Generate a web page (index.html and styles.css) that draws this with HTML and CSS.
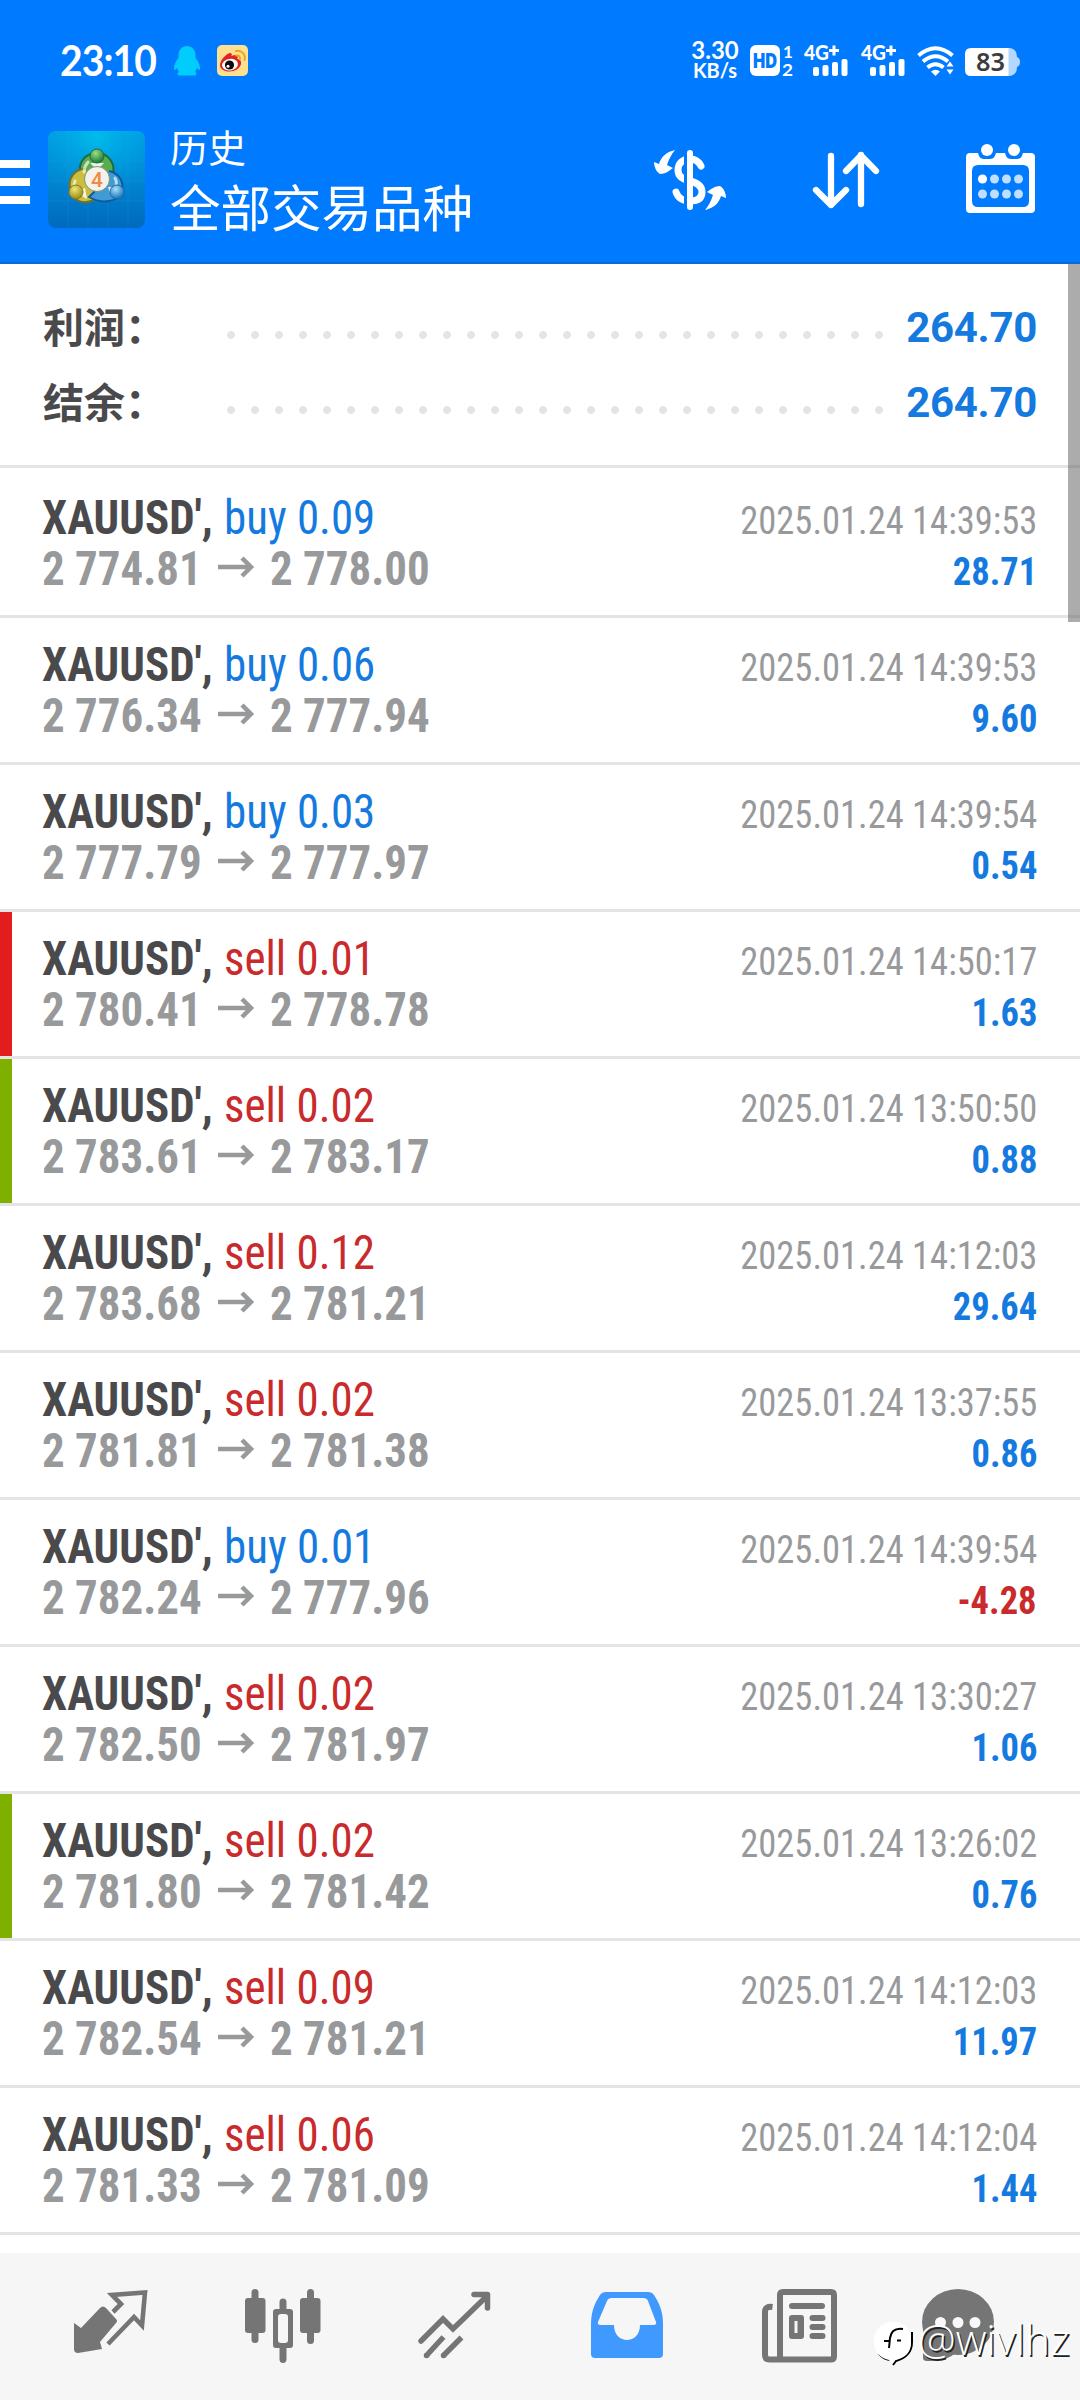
FILE: index.html
```
<!DOCTYPE html>
<html lang="zh-CN">
<head>
<meta charset="utf-8">
<title>历史</title>
<link rel="stylesheet" href="styles.css">
</head>
<body>
<header class="header">
  <div class="status">
    <span class="clock">23:10</span>
    <svg class="qq" width="26" height="30" viewBox="0 0 26 30"><path fill="#00cdfc" d="M13 0C8 0 4.500 4 4.500 9v3C2 15 0 18.500 0 22c0 2.500 1 2.500 3 0 .5 1.500 1 2.700 2 3.700-2 1-2 3.300 0 3.800h16c2-.5 2-2.800 0-3.800 1-1 1.500-2.200 2-3.700 2 2.500 3 2.500 3 0 0-3.500-2-7-4.500-10V9C21.500 4 18 0 13 0z"/></svg>
    <svg class="weibo" width="31" height="31" viewBox="0 0 31 31"><rect width="31" height="31" rx="5" fill="#ffe08e"/><path d="M3 20c0-5 6-11 10-12 2 0 2 1 1.500 3 3-1.500 5-1.500 6 0 .5 1 0 2 0 3 3 .8 4 2.500 3.500 5-1 4.500-6 7.500-11.500 7.500S3 24 3 20z" fill="#de2427"/><ellipse cx="13" cy="19.700" rx="8" ry="5.800" fill="#fff" transform="rotate(-8 13 19.700)"/><circle cx="12.500" cy="20" r="4.600" fill="#0b0b0b"/><circle cx="11" cy="21.200" r="1.500" fill="#fff"/><path d="M19 10.500c3-.5 4.500 1.500 4 4M19 6c6-1 10 3.500 8.500 9" fill="none" stroke="#eda321" stroke-width="2" stroke-linecap="round"/></svg>
    <div class="speed"><span>3.30</span><span class="unit">KB/s</span></div>
    <svg class="hd" width="44" height="31" viewBox="0 0 44 31"><rect width="30" height="31" rx="6" fill="#fff"/><text x="3" y="22.500" class="hd-text" textLength="24" lengthAdjust="spacingAndGlyphs">HD</text><text x="33" y="13" class="sim">1</text><text x="32" y="30.500" class="sim" textLength="11" lengthAdjust="spacingAndGlyphs">2</text></svg>
    <svg class="signal" width="46" height="31" viewBox="0 0 46 31"><text x="0" y="15" class="net" textLength="25" lengthAdjust="spacingAndGlyphs">4G</text><path d="M25 5.500h10M30 .5v10" stroke="#fff" stroke-width="3"/><g fill="#fff"><rect x="9" y="22" width="6" height="9" rx="2"/><rect x="18.500" y="20" width="6" height="11" rx="2"/><rect x="28" y="17" width="6" height="14" rx="2"/><rect x="37.500" y="14" width="6" height="17" rx="2"/></g></svg>
    <svg class="signal" width="46" height="31" viewBox="0 0 46 31"><text x="0" y="15" class="net" textLength="25" lengthAdjust="spacingAndGlyphs">4G</text><path d="M25 5.500h10M30 .5v10" stroke="#fff" stroke-width="3"/><g fill="#fff"><rect x="9" y="22" width="6" height="9" rx="2"/><rect x="18.500" y="20" width="6" height="11" rx="2"/><rect x="28" y="17" width="6" height="14" rx="2"/><rect x="37.500" y="14" width="6" height="17" rx="2"/></g></svg>
    <svg class="wifi" width="38" height="30" viewBox="0 0 38 30"><g fill="none" stroke="#fff" stroke-width="4"><path d="M1.500 9.500Q18.500-5 35.500 9.500"/><path d="M6 15.500q12.500-10.500 25 0"/><path d="M10.500 21.500q8-6.500 16 0"/></g><path d="M14 25.500q4.500-3.500 9 0L18.500 30z" fill="#fff"/><path d="M29.500 20.500l3.500-5 3.500 5zM29.500 23.500h7l-3.500 5z" fill="#fff"/></svg>
    <svg class="battery" width="55" height="28" viewBox="0 0 55 28"><path d="M43 0h2q7 1 7 9 3 1 3 5t-3 5q0 8-7 9h-2z" fill="#b3d7ff"/><path d="M6 0h37.500v28H6q-6 0-6-6V6q0-6 6-6z" fill="#fff"/><text x="11" y="23" class="level" textLength="29" lengthAdjust="spacingAndGlyphs">83</text></svg>
  </div>
  <div class="toolbar">
    <svg class="menu" width="30" height="44" viewBox="0 0 30 44" fill="#fff"><path d="M0 0h30v8H0zM0 18h30v8H0zM0 36h30v8H0z"/></svg>
    <svg class="logo" width="97" height="97" viewBox="0 0 97 97">
      <defs><linearGradient id="sky" x1="0" y1="0" x2="0" y2="1"><stop offset="0" stop-color="#00a2e6"/><stop offset=".5" stop-color="#0086d2"/><stop offset="1" stop-color="#0069be"/></linearGradient>
      <radialGradient id="glow" cx=".5" cy=".05" r=".7"><stop offset="0" stop-color="#00c4ee" stop-opacity=".8"/><stop offset="1" stop-color="#0093d8" stop-opacity="0"/></radialGradient>
      <radialGradient id="gb" cx=".4" cy=".3" r=".7"><stop offset="0" stop-color="#a0dc87"/><stop offset="1" stop-color="#187b35"/></radialGradient>
      <radialGradient id="yb" cx=".4" cy=".3" r=".7"><stop offset="0" stop-color="#f3e675"/><stop offset="1" stop-color="#9b8a16"/></radialGradient>
      <radialGradient id="bb" cx=".4" cy=".3" r=".7"><stop offset="0" stop-color="#a8e0fb"/><stop offset="1" stop-color="#1673b8"/></radialGradient></defs>
      <rect width="97" height="97" rx="8" fill="url(#sky)"/><rect width="97" height="97" rx="8" fill="url(#glow)"/>
      <path d="M0 30h97M0 50h97M0 70h97M20 0v97M40 0v97M60 0v97M80 0v97" stroke="#4ebbe8" stroke-opacity=".12"/>
      <path d="M33 44c-4-12 4-22 16-22s20 12 15 24l-9 10" fill="#59ad4f" stroke="#1d6b43" stroke-width="2"/>
      <path d="M37 38c-11 0-17 10-15 20 2 12 13 16 24 11l3-14" fill="#c9bf3d" stroke="#756f25" stroke-width="2"/>
      <path d="M61 40c10 2 15 11 13 19-3 12-19 15-33 7l12-12" fill="#3e9bd4" stroke="#105a9c" stroke-width="2"/>
      <path d="M40 31q-4 5-4 10M27 50q-2 6 1 10M67 47q4 7-3 14" stroke="#fff" stroke-opacity=".65" stroke-width="3" fill="none" stroke-linecap="round"/>
      <path d="M42 32h14l-7 7zM27 61l10-4 2 11zM63 65l-3-9 12 0z" fill="#fff" fill-opacity=".85"/>
      <circle cx="49" cy="25" r="7" fill="url(#gb)" stroke="#246c38"/><circle cx="28" cy="61" r="7" fill="url(#yb)" stroke="#857923"/><circle cx="69" cy="61" r="7" fill="url(#bb)" stroke="#1c69a7"/>
      <circle cx="49" cy="48" r="12.500" fill="#f5f2ee" stroke="#80917a" stroke-width="1"/><text x="49" y="55.500" text-anchor="middle" class="four">4</text>
    </svg>
    <div class="titles"><span class="sub">历史</span><span class="main">全部交易品种</span></div>
    <svg class="act-money" width="76" height="64" viewBox="0 0 76 64"><path d="M49 18C46 12 42 11 38 11c-8 0-12 5-12 11 0 7 5 9 12 11 8 2 12 5 12 11 0 6-4 9-12 9-7 0-12-3-14-9" fill="none" stroke="#fff" stroke-width="7" stroke-linecap="round"/><path d="M36.500 5v54" stroke="#007aff" stroke-width="9"/><path d="M38 5v54" stroke="#fff" stroke-width="6" stroke-linecap="round"/><g fill="#fff"><path id="swing" d="M23 2C14 4 9 9 7 16L2 14c0 4 2 10 6 12 5 0 9-3 13-6l-6-3c2-6 4-10 8-15z"/><use href="#swing" transform="rotate(180 38 32)"/></g></svg>
    <svg class="act-sort" width="66" height="56" viewBox="0 0 66 56"><g fill="none" stroke="#fff" stroke-width="6.300" stroke-linecap="round" stroke-linejoin="round"><path d="M18 4v49M3 38l15 15 15-15M48 52V3M33 19L48 3.500 63 19"/></g></svg>
    <svg class="act-cal" width="69" height="69" viewBox="0 0 69 69"><path fill="#fff" fill-rule="evenodd" d="M4 9h8c1 3 2 6 6 6h6c4 0 5-3 6-6h9c1 3 2 6 6 6h6c4 0 5-3 6-6h8q4 0 4 4v52q0 4-4 4H4q-4 0-4-4V13q0-4 4-4zM12 21q-6 0-6 6v30q0 6 6 6h45q6 0 6-6V27q0-6-6-6z"/><g fill="#fff"><circle cx="21" cy="6" r="6"/><circle cx="48" cy="6" r="6"/><circle cx="16.500" cy="35" r="4.600"/></g><g fill="#bfdfff"><circle cx="28.500" cy="35" r="4.500"/><circle cx="40.500" cy="35" r="4.500"/><circle cx="52.500" cy="35" r="4.500"/><circle cx="16.500" cy="50" r="4.500"/><circle cx="28.500" cy="50" r="4.500"/><circle cx="40.500" cy="50" r="4.500"/><circle cx="52.500" cy="50" r="4.500"/></g></svg>
  </div>
</header>

<main class="content">
  <section class="summary">
    <div class="sum-row"><span class="sum-label">利润：</span><span class="dots"></span><span class="sum-value">264.70</span></div>
    <div class="sum-row"><span class="sum-label">结余：</span><span class="dots"></span><span class="sum-value">264.70</span></div>
  </section>
  <section class="deals" id="deals"></section>
  <div class="scrollbar"></div>
</main>

<nav class="tabs">
  <svg class="tab" width="76" height="76" viewBox="0 0 76 76"><path fill="#757575" d="M1 35l7 5 19-20q3-3 6 0l10 11q2 2 0 4L27 54l2 7-24 4q-4 0-4-4z"/><path fill="none" stroke="#757575" stroke-width="4.600" d="M40 21l8-8-9-9 33-2.500-3 33-8-8.500-26 27" transform="translate(0 3)"/></svg>
  <svg class="tab" width="76" height="76" viewBox="0 0 76 76" fill="#757575"><path fill-rule="evenodd" d="M31 21h14q3 0 3 3v33q0 3-3 3H31q-3 0-3-3V24q0-3 3-3zm5 5q-3 0-3 3v23q0 3 3 3h4q3 0 3-3V29q0-3-3-3z"/><rect x="0" y="10" width="20.500" height="35" rx="3"/><rect x="55" y="10" width="20.500" height="35" rx="3"/><rect x="6.500" y="1" width="7" height="54" rx="3.500"/><rect x="62" y="1" width="7" height="55" rx="3.500"/><path d="M34.500 23v-9q0-3.500 3.500-3.500t3.500 3.500v9zM34.500 58h7v13q0 4-3.500 4t-3.500-4z"/></svg>
  <svg class="tab" width="76" height="76" viewBox="0 0 76 76" fill="none" stroke="#757575" stroke-width="5.500"><path d="M4 53l22-22 10 10L70 8" stroke-linecap="round"/><path d="M57 6.500h13.500V20" stroke-linejoin="round" stroke-linecap="round"/><path d="M9.500 67.500l17-18.500M26.500 67.500l18-18"/><path d="M9.500 67.500h.1M26.500 67.500h.1" stroke-linecap="round"/></svg>
  <svg class="tab" width="76" height="76" viewBox="0 0 76 76" fill="#4099ff"><path fill-rule="evenodd" d="M17 4h42q4 0 6 3c6 9 9 18 9 29v30q0 4-4 4H6q-4 0-4-4V36C2 25 5 16 11 7q2-3 6-3zM23 10q-4 0-5 3L9 34q-1 3 3 3h13c0 20 26 20 26 0h13q4 0 3-3l-8-21q-1-3-5-3z"/></svg>
  <svg class="tab" width="76" height="76" viewBox="0 0 76 76" fill="#757575"><path fill="none" stroke="#757575" stroke-width="6" d="M11.500 19Q4 18 4 24v43q0 4.500 4.500 4.500H70q3 0 3-3V7q0-3-3-3H22q-3 0-3 3v61q0 3.500-3.500 3.500"/><rect x="28" y="15" width="36" height="6" rx="3"/><path fill-rule="evenodd" d="M31 27h9q3 0 3 3v18q0 3-3 3h-9q-3 0-3-3V30q0-3 3-3zm2.500 6v12h3V33z"/><rect x="48.500" y="27" width="16" height="6" rx="3"/><rect x="48.500" y="36" width="16" height="6" rx="3"/><rect x="48.500" y="45" width="16" height="6" rx="3"/></svg>
  <svg class="tab chat" width="76" height="76" viewBox="0 0 76 76"><ellipse cx="38" cy="34" rx="36" ry="33" fill="#757575"/><path d="M3 35v35q0 3 4 3c10 0 22-2 27-7z" fill="#757575"/><g fill="#f9f9f9"><circle cx="20.500" cy="34.500" r="5.500"/><circle cx="38" cy="34.500" r="5.500"/><circle cx="55" cy="34.500" r="5.500"/></g></svg>
  <div class="watermark"><svg width="42" height="44" viewBox="0 0 42 44"><path d="M5 32c4 5 8 6 12 6M19 43l3-4c10-3 16-8 16-19V10" fill="none" stroke="#000" stroke-width="2"/><path d="M19 0c12 0 18 7 18 19 0 13-7 17-16 19l-3 4-3-4C5 36 0 29 0 19S7 0 19 0z" fill="#fff"/><path d="M29 7c-8-1-12 2-13 9l-1 10M10 19h6M23 18.500h4" fill="none" stroke="#000" stroke-width="2"/></svg><span>@wivlhz</span></div>
</nav>
<script src="deals.js"></script>
</body>
</html>
```
FILE: deals.js
```
const deals = [
  ['buy', '0.09', '2 774.81', '2 778.00', '14:39:53', '28.71'],
  ['buy', '0.06', '2 776.34', '2 777.94', '14:39:53', '9.60'],
  ['buy', '0.03', '2 777.79', '2 777.97', '14:39:54', '0.54'],
  ['sell', '0.01', '2 780.41', '2 778.78', '14:50:17', '1.63', 'stop'],
  ['sell', '0.02', '2 783.61', '2 783.17', '13:50:50', '0.88', 'take'],
  ['sell', '0.12', '2 783.68', '2 781.21', '14:12:03', '29.64'],
  ['sell', '0.02', '2 781.81', '2 781.38', '13:37:55', '0.86'],
  ['buy', '0.01', '2 782.24', '2 777.96', '14:39:54', '-4.28'],
  ['sell', '0.02', '2 782.50', '2 781.97', '13:30:27', '1.06'],
  ['sell', '0.02', '2 781.80', '2 781.42', '13:26:02', '0.76', 'take'],
  ['sell', '0.09', '2 782.54', '2 781.21', '14:12:03', '11.97'],
  ['sell', '0.06', '2 781.33', '2 781.09', '14:12:04', '1.44'],
];
document.getElementById('deals').innerHTML = deals.map(([side, lot, open, close, time, profit, mark]) => `
  <article class="deal ${mark || ''}">
    <div class="line"><span class="symbol">XAUUSD',</span><span class="side ${side}">${side} ${lot}</span><span class="time">2025.01.24 ${time}</span></div>
    <div class="line"><span class="price">${open}</span><svg class="arrow" width="36" height="22" viewBox="0 0 36 22"><path d="M0 11h33M24 2l9 9-9 9" fill="none" stroke="#98999b" stroke-width="4.500"/></svg><span class="price">${close}</span><span class="profit ${profit < 0 ? 'loss' : ''}">${profit}</span></div>
  </article>`).join('');
```
FILE: styles.css
```
* { box-sizing: border-box; }
body { margin: 0; width: 1080px; height: 2400px; overflow: hidden; display: flex; flex-direction: column; background: #fff; font-family: "Roboto Condensed", Roboto, "Noto Sans CJK SC", sans-serif; }
svg { display: block; flex: none; overflow: visible; }

.header { flex: none; height: 264px; background: #007aff; border-bottom: 2px solid #0a6bd6; color: #fff; }
.status { height: 120px; padding-left: 60px; display: flex; align-items: flex-start; }
.clock { width: 114px; margin-top: 35px; font: 700 42px/50px Lato, sans-serif; letter-spacing: -1px; white-space: nowrap; transform: scaleX(.93); transform-origin: 0 0; }
.qq { margin-top: 46px; }
.weibo { margin: 45px 0 0 17px; }
.speed { width: 48px; margin: 40px 11px 0 443px; display: flex; flex-direction: column; align-items: center; white-space: nowrap; font: 700 24px/20px Lato, sans-serif; }
.unit { font-size: 20px; line-height: 20px; }
.hd { margin-top: 45px; }
.hd-text { font: 900 20px Inter, sans-serif; fill: #007aff; }
.sim { font: 700 17px Lato, sans-serif; fill: #fff; }
.signal { margin: 45px 0 0 11px; }
.hd + .signal { margin-left: 10px; }
.net { font: 900 20px Lato, sans-serif; fill: #fff; }
.wifi { margin: 46px 0 0 10px; }
.battery { margin: 48px 0 0 10px; }
.level { font: 600 25px "Noto Sans", sans-serif; fill: #3c3c3c; }

.toolbar { height: 144px; display: flex; align-items: flex-start; }
.menu { margin-top: 40px; }
.logo { margin: 11px 0 0 18px; }
.four { font: 500 21px Roboto, sans-serif; fill: #f08a3c; }
.titles { width: 480px; margin: -3px 0 0 25px; display: flex; flex-direction: column; font-family: "Noto Sans CJK SC", sans-serif; white-space: nowrap; }
.sub { font-size: 38px; line-height: 57px; }
.main { font-size: 50.5px; line-height: 62px; }
.act-money { margin: 28px 0 0 2px; }
.act-sort { margin: 32px 0 0 85px; }
.act-cal { margin: 24px 0 0 87px; }

.content { position: relative; flex: none; height: 1989px; }
.summary { height: 204px; padding: 27px 43px 0; border-bottom: 3px solid #e4e4e4; }
.sum-row { height: 75px; display: flex; align-items: flex-start; }
.sum-label { width: 180px; white-space: nowrap; font: 700 41px/68px "Noto Sans CJK SC", sans-serif; color: #4a4a4c; }
.dots { width: 664px; height: 8px; margin-top: 40px; background: radial-gradient(circle at 8px 4px, #e4e4e4 3.500px, transparent 4.300px) 0 0 / 24px 8px; }
.sum-value { margin-left: auto; font: 700 42px/74px Roboto, sans-serif; letter-spacing: -.3px; color: #157ae0; }

.deal { height: 147px; padding: 21px 43px 0 42px; border-bottom: 3px solid #e4e4e4; }
.deal:first-child { height: 150px; padding-top: 24px; }
.take { background: linear-gradient(#7fb000, #7fb000) 0 0 / 12px 100% no-repeat; }
.stop { background: linear-gradient(#e21d1d, #e21d1d) 0 0 / 12px 100% no-repeat; }
.line { height: 51px; display: flex; align-items: baseline; white-space: nowrap; line-height: 51px; }
.symbol, .side, .price { font-size: 48px; transform: scaleX(.936); transform-origin: 0 50%; }
.symbol { width: 182px; font-weight: 700; color: #4a4a4c; }
.buy { color: #157ae0; }
.sell { color: #c92a2c; }
.price { font-weight: 700; color: #98999b; width: 176px; }
.arrow { align-self: flex-start; margin: 13px 16px 0 0; }
.time, .profit { margin-left: auto; font-size: 39px; transform: scaleX(.936); transform-origin: 100% 50%; }
.time { color: #98999b; }
.profit { font-weight: 700; color: #157ae0; }
.profit.loss { color: #c92a2c; }
.scrollbar { position: absolute; right: 0; top: 0; width: 12px; height: 358px; background: rgba(90, 90, 90, .5); }

.tabs { position: relative; flex: none; height: 147px; padding: 35px 0 0 73px; display: flex; gap: 96px; background: #f6f6f6; }
.chat { margin-left: -13px; }
.watermark { position: absolute; left: 874px; top: 69px; display: flex; color: #fff; font: 300 42.500px/44px "Open Sans", sans-serif; text-shadow: 1.500px 1.500px 0 #222; white-space: nowrap; }
.watermark span { margin-left: 2px; margin-top: -5px; }
```
